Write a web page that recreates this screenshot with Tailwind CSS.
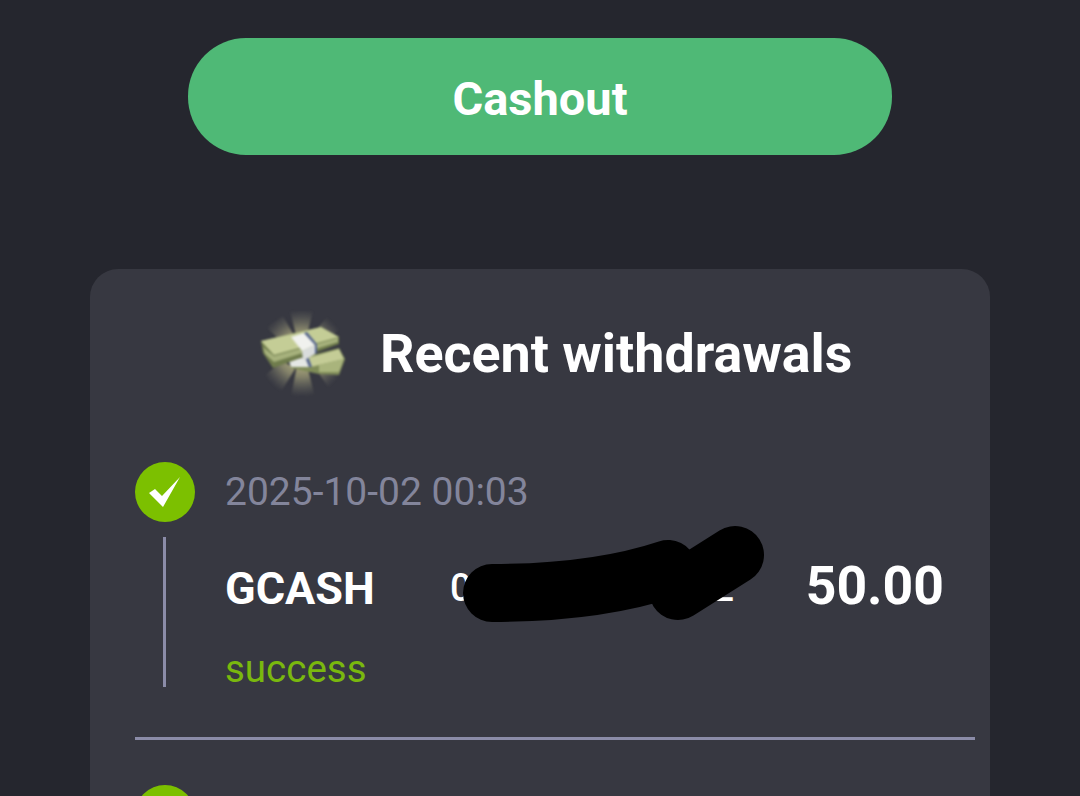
<!DOCTYPE html>
<html>
<head>
<meta charset="utf-8">
<script src="https://cdn.jsdelivr.net/npm/@tailwindcss/browser@4"></script>
</head>
<body class="m-0">
<div class="relative h-[796px] w-[1080px] overflow-hidden bg-[#25262e] pt-[38px] font-['Roboto',sans-serif] text-white">
  <div class="mx-auto flex h-[117px] w-[704px] items-center justify-center rounded-[58px] bg-[#4fb976] pt-[3px] text-[47px] font-bold leading-none">Cashout</div>

  <div class="mx-auto mt-[114px] h-[600px] w-[900px] rounded-[28px] bg-[#373841] pl-[45px] pr-[15px]">
    <div class="flex h-[170px] items-center pl-[124px]">
      <svg class="mr-[31px] h-[90px] w-[90px] shrink-0" viewBox="20 10 90 90" style="filter:blur(0.8px)">
        <defs>
          <radialGradient id="ray" gradientUnits="userSpaceOnUse" cx="63" cy="54" r="44">
            <stop offset="0" stop-color="#f6f0a0" stop-opacity="0.9"/>
            <stop offset="0.55" stop-color="#cfcb92" stop-opacity="0.5"/>
            <stop offset="1" stop-color="#8f8f80" stop-opacity="0"/>
          </radialGradient>
        </defs>
        <g fill="url(#ray)">
          <polygon points="51,12 74,12 67,40 58,40"/>
          <polygon points="27,28 44,17 57,40 46,46"/>
          <polygon points="76,32 90,16 104,28 80,46"/>
          <polygon points="26,76 40,96 56,70 44,62"/>
          <polygon points="52,98 76,98 68,66 58,66"/>
          <polygon points="74,66 92,92 104,78 84,60"/>
        </g>
        <polygon points="50,62 100,49 106,60 100,76 80,75 52,69" fill="#7f8c58"/>
        <polygon points="54,63 100,50 105,60 80,66 72,68" fill="#c4cc96"/>
        <polygon points="80,66 105,60 100,73 80,73" fill="#a9b47c"/>
        <polygon points="50,62 66,58 70,68 52,68" fill="#e4e7e4"/>
        <polygon points="66,58 69,57 73,68 70,68" fill="#56658f"/>
        <polygon points="22,42 82,28 100,38 100,45 34,69 24,54" fill="#6f7c4c"/>
        <polygon points="22,42 82,28 100,38 35,56" fill="#c4cd96"/>
        <polygon points="24,48 35,57 99,39 99,43 35,63 26,55" fill="#a6b17c"/>
        <polygon points="52,38 65,34 76,46 63,52" fill="#f0f1ee"/>
        <polygon points="63,52 76,46 76,55 64,62" fill="#d9dcdc"/>
        <polygon points="65,34 68,33 78,45 76,46" fill="#56658f"/>
        <polygon points="76,46 78,45 78,54 76,55" fill="#56658f"/>
      </svg>
      <div class="text-[53.8px] font-bold leading-none whitespace-nowrap">Recent withdrawals</div>
    </div>

    <div class="flex h-[301px] border-b-[3px] border-[#8b8ca8]">
      <div class="flex w-[60px] shrink-0 flex-col pt-[23px]">
        <div class="flex h-[60px] w-[60px] items-center justify-center rounded-full bg-[#7cc000]">
          <svg class="h-[36px] w-[36px]" viewBox="0 0 36 36"><path d="M2 19 L8 15 L15 22 L33 3 L16 33 Z" fill="#fff"/></svg>
        </div>
        <div class="ml-[28px] mt-[15px] h-[150px] w-[3px] bg-[#8b8ca8]"></div>
      </div>
      <div class="ml-[30px] flex flex-1 flex-col pr-[31px]">
        <div class="mt-[31px] h-[44px] text-[39px] leading-[44px] text-[#83859b] whitespace-nowrap">2025-10-02 00:03</div>
        <div class="mt-[37px] flex h-[70px] items-center">
          <div class="w-[225px] pt-[5px] text-[45px] font-bold leading-none">GCASH</div>
          <div class="flex w-[284px] justify-between pt-[4px] text-[38px] font-medium leading-none"><span>0</span><span>2</span></div>
          <div class="ml-auto text-[53.5px] font-bold leading-none">50.00</div>
        </div>
        <div class="mt-[26px] text-[38.5px] leading-[44px] text-[#7ab80e]">success</div>
      </div>
    </div>

    <div class="mt-[45px] h-[60px] w-[60px] rounded-full bg-[#7cc000]"></div>
  </div>

  <svg class="absolute left-0 top-0 h-[796px] w-[1080px]" viewBox="0 0 1080 796" fill="none" stroke="#000" stroke-width="58" stroke-linecap="round" stroke-linejoin="round">
    <path d="M492 593 C560 593 620 585 668 569"/>
    <path d="M678 591 L735 555"/>
  </svg>
</div>
</body>
</html>
